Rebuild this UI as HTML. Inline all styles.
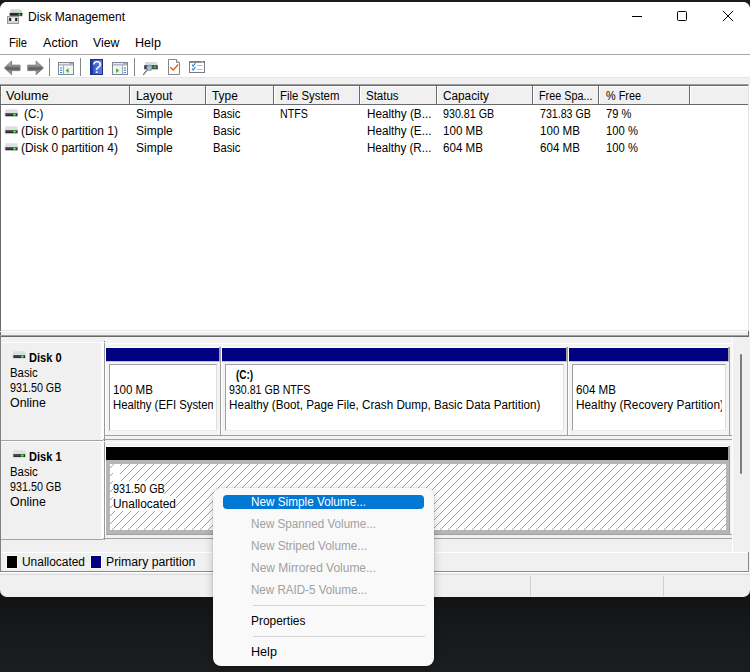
<!DOCTYPE html><html><head><meta charset="utf-8"><title>Disk Management</title><style>

html,body{margin:0;padding:0}
body{width:750px;height:672px;overflow:hidden;background:linear-gradient(#1a1b1d 0,#1a1b1d 590px,#121314 598px,#17181a 625px,#1c1d1f 672px);position:relative;font-family:"Liberation Sans", sans-serif;font-size:12px;color:#000}
div,span,svg{position:absolute;box-sizing:border-box}
.t{white-space:nowrap;line-height:14px;height:14px;transform-origin:0 50%;display:block}
.b{font-weight:bold}
.dis{color:#a2a2a2}

</style></head><body>
<div style="left:0px;top:2px;width:750px;height:595px;background:#f0f0f0;border-radius:7px"></div>
<div style="left:0px;top:2px;width:750px;height:75px;background:#fff;border-radius:7px 7px 0 0"></div>
<div style="left:0px;top:54px;width:750px;height:1px;background:#a8a8a8;"></div>
<div style="left:0px;top:77px;width:750px;height:1px;background:#e6e6e6;"></div>
<svg style="left:628px;top:6px" width="112" height="22" viewBox="0 0 112 22">
<path d="M4 10.5h10" stroke="#000" stroke-width="1" fill="none"/>
<rect x="49.5" y="5.5" width="9" height="9" rx="1" fill="none" stroke="#000" stroke-width="1"/>
<path d="M95 5l10 10M105 5l-10 10" stroke="#000" stroke-width="1" fill="none"/>
</svg>
<svg style="left:6px;top:8px" width="18" height="17" viewBox="0 0 18 17">
<defs><linearGradient id="tg" x1="0" y1="0" x2="0" y2="1"><stop offset="0" stop-color="#e2e4e7"/><stop offset="1" stop-color="#c4c7cb"/></linearGradient></defs>
<path d="M5 1h10l1.5 4h-13z" fill="url(#tg)"/>
<rect x="3.6" y="5" width="12.8" height="3" rx=".4" fill="#2b2b2b"/>
<rect x="3.3" y="7.8" width="13.4" height=".8" fill="#cfd2d6"/>
<circle cx="13.4" cy="6.5" r="1" fill="#35e23a"/>
<rect x="1.5" y="8.5" width="11" height="7" fill="#d6d6d6" stroke="#9a9a9a" stroke-width="1"/>
<rect x="3.2" y="10" width="2" height="3" fill="#1c1c1c"/>
<rect x="9.2" y="10" width="2" height="3" fill="#1c1c1c"/>
<rect x="5.6" y="10" width="3.2" height="3" fill="#f4f4f4"/>
</svg>
<svg style="left:3px;top:60px" width="42" height="16" viewBox="0 0 42 16">
<defs><linearGradient id="ag" x1="0" y1="0" x2="0" y2="1"><stop offset="0" stop-color="#c8c8c8"/><stop offset=".3" stop-color="#9a9a9a"/><stop offset=".55" stop-color="#5c5c5c"/><stop offset=".75" stop-color="#8e8e8e"/><stop offset="1" stop-color="#c0c0c0"/></linearGradient></defs>
<path d="M1.4 7.9 L8.6 1.1 V5.2 H17 V10.6 H8.6 V14.7 Z" fill="url(#ag)" stroke="#7c7c7c" stroke-width="1" stroke-linejoin="round"/>
<path d="M40.4 7.9 L33.2 1.1 V5.2 H24.8 V10.6 H33.2 V14.7 Z" fill="url(#ag)" stroke="#7c7c7c" stroke-width="1" stroke-linejoin="round"/>
</svg>
<div style="left:49px;top:58px;width:1px;height:18px;background:#868686;"></div>
<div style="left:80px;top:58px;width:1px;height:18px;background:#868686;"></div>
<div style="left:134px;top:58px;width:1px;height:18px;background:#868686;"></div>
<svg style="left:58px;top:62px" width="16" height="13" viewBox="0 0 16 13"><rect x=".5" y=".5" width="15" height="12" fill="#fff" stroke="#7f8896"/><rect x="1" y="1" width="14" height="1.4" fill="#e4e8ee"/><rect x="11.6" y="1" width="1.2" height="1.2" fill="#7f8896"/><rect x="13.4" y="1" width="1.2" height="1.2" fill="#7f8896"/><rect x="1" y="2.4" width="14" height="1" fill="#8b93a0"/><rect x="5.2" y="3.4" width=".9" height="8.6" fill="#8b93a0"/><rect x="2" y="5.6" width="2.3" height="1" fill="#3c7fd6"/><rect x="2" y="7.8" width="2.3" height="1" fill="#3c7fd6"/><rect x="2" y="10.1" width="2.3" height="1" fill="#3c7fd6"/><rect x="6.1" y="4" width="8.9" height="8" fill="#f4f4f4"/><path d="M7.7 8.6l2.9-2.4v4.8z" fill="#3dab25"/></svg>
<svg style="left:112px;top:62px" width="16" height="13" viewBox="0 0 16 13"><rect x=".5" y=".5" width="15" height="12" fill="#fff" stroke="#7f8896"/><rect x="1" y="1" width="14" height="1.4" fill="#e4e8ee"/><rect x="11.6" y="1" width="1.2" height="1.2" fill="#7f8896"/><rect x="13.4" y="1" width="1.2" height="1.2" fill="#7f8896"/><rect x="1" y="2.4" width="14" height="1" fill="#8b93a0"/><rect x="9.9" y="3.4" width=".9" height="8.6" fill="#8b93a0"/><rect x="11.7" y="5.6" width="2.3" height="1" fill="#3c7fd6"/><rect x="11.7" y="7.8" width="2.3" height="1" fill="#3c7fd6"/><rect x="11.7" y="10.1" width="2.3" height="1" fill="#3c7fd6"/><rect x="1" y="4" width="8.9" height="8" fill="#f4f4f4"/><path d="M7.1 8.6l-2.9-2.4v4.8z" fill="#3dab25"/></svg>
<svg style="left:90px;top:59px" width="13" height="16" viewBox="0 0 13 16">
<defs><linearGradient id="hg" x1="0" y1="0" x2="1" y2="0"><stop offset="0" stop-color="#1b3aa6"/><stop offset=".22" stop-color="#1b3aa6"/><stop offset=".25" stop-color="#3a5bc8"/><stop offset="1" stop-color="#5e82dd"/></linearGradient></defs>
<rect x="0" y="0" width="13" height="16" fill="url(#hg)"/><rect x=".5" y=".5" width="12" height="15" fill="none" stroke="#1a2f8c"/>
<text x="6.9" y="13.5" font-family="Liberation Sans" font-size="16.5" fill="#fff" text-anchor="middle">?</text>
</svg>
<svg style="left:142px;top:61px" width="18" height="15" viewBox="0 0 18 15">
<path d="M3.5 1h11l1.2 3.2h-13.4z" fill="#d9dbde"/>
<rect x="2.2" y="4.2" width="13.6" height="4.2" fill="#3a3a3a"/>
<rect x="2" y="8.2" width="14" height="1" fill="#cfd2d6"/>
<rect x="11.6" y="5.4" width="2.6" height="1.8" fill="#2fe23a"/>
<circle cx="7.4" cy="6.8" r="2.7" fill="#a9cdea" fill-opacity=".9" stroke="#7d8894" stroke-width=".9"/>
<path d="M5.3 8.9L1.6 13.4" stroke="#6f7a86" stroke-width="1.4" stroke-linecap="round"/>
</svg>
<svg style="left:167px;top:58px" width="14" height="18" viewBox="0 0 14 18">
<path d="M1.5 1.5h8l3 3v12h-11z" fill="#fff" stroke="#858585" stroke-width="1"/>
<path d="M9.5 1.5v3h3" fill="#f0f0f0" stroke="#858585" stroke-width="1"/>
<path d="M3.3 9.3l3 2.8 4.8-5.6" fill="none" stroke="#e8561c" stroke-width="1.4"/>
</svg>
<svg style="left:189px;top:61px" width="16" height="12" viewBox="0 0 16 12">
<rect x=".5" y=".5" width="15" height="11" fill="#fff" stroke="#787d85"/>
<rect x="0" y="0" width="16" height="1.8" fill="#787d85"/><rect x="12.6" y=".6" width="1" height="1" fill="#fff"/>
<path d="M3 3.6l1.2 1.4 2.2-2.8" fill="none" stroke="#2f86e0" stroke-width="1.2"/>
<path d="M3 7.6l1.2 1.4 2.2-2.8" fill="none" stroke="#2f86e0" stroke-width="1.2"/>
<rect x="8.4" y="4" width="5" height="1" fill="#b5b5b5"/><rect x="8.4" y="8" width="5" height="1" fill="#b5b5b5"/>
</svg>
<div style="left:0px;top:84px;width:749px;height:1px;background:#a0a0a0;"></div>
<div style="left:0px;top:85px;width:749px;height:1px;background:#696969;"></div>
<div style="left:0px;top:85px;width:1px;height:251px;background:#696969;"></div>
<div style="left:1px;top:86px;width:747px;height:244px;background:#fff;"></div>
<div style="left:748px;top:85px;width:1px;height:246px;background:#e3e3e3;"></div>
<div style="left:749px;top:84px;width:1px;height:248px;background:#fff;"></div>
<div style="left:1px;top:330px;width:748px;height:1px;background:#e3e3e3;"></div>
<div style="left:0px;top:331px;width:750px;height:1px;background:#fff;"></div>
<div style="left:1px;top:86px;width:747px;height:18px;background:#f0f0f0;"></div>
<div style="left:1px;top:86px;width:747px;height:1px;background:#fff;"></div>
<div style="left:1px;top:104px;width:747px;height:1px;background:#696969;"></div>
<div style="left:1px;top:86px;width:1px;height:18px;background:#fff;"></div>
<div style="left:129px;top:86px;width:1px;height:19px;background:#696969;"></div>
<div style="left:130px;top:86px;width:1px;height:18px;background:#fff;"></div>
<div style="left:205px;top:86px;width:1px;height:19px;background:#696969;"></div>
<div style="left:206px;top:86px;width:1px;height:18px;background:#fff;"></div>
<div style="left:273px;top:86px;width:1px;height:19px;background:#696969;"></div>
<div style="left:274px;top:86px;width:1px;height:18px;background:#fff;"></div>
<div style="left:359px;top:86px;width:1px;height:19px;background:#696969;"></div>
<div style="left:360px;top:86px;width:1px;height:18px;background:#fff;"></div>
<div style="left:436px;top:86px;width:1px;height:19px;background:#696969;"></div>
<div style="left:437px;top:86px;width:1px;height:18px;background:#fff;"></div>
<div style="left:532px;top:86px;width:1px;height:19px;background:#696969;"></div>
<div style="left:533px;top:86px;width:1px;height:18px;background:#fff;"></div>
<div style="left:598px;top:86px;width:1px;height:19px;background:#696969;"></div>
<div style="left:599px;top:86px;width:1px;height:18px;background:#fff;"></div>
<div style="left:689px;top:86px;width:1px;height:19px;background:#696969;"></div>
<div style="left:690px;top:86px;width:1px;height:18px;background:#fff;"></div>
<svg style="left:3.5px;top:108.7px" width="14.9" height="8.38125" viewBox="0 0 16 9">
<path d="M1.8 .3h12.4l.4 2.2 .9 .6v5.6h-15v-5.6l.9-.6z" fill="#dcdee2"/>
<rect x="1.5" y="4.6" width="13" height="3.1" fill="#2c2c2c"/>
<rect x="2.2" y="5.8" width="7.5" height=".6" fill="#555"/>
<path d="M10.7 4.5h1.3v1h1.1v1.3h-1.1v1h-1.3v-1h-1.1v-1.3h1.1z" fill="#2fe63a"/>
</svg>
<svg style="left:3.5px;top:125.7px" width="14.9" height="8.38125" viewBox="0 0 16 9">
<path d="M1.8 .3h12.4l.4 2.2 .9 .6v5.6h-15v-5.6l.9-.6z" fill="#dcdee2"/>
<rect x="1.5" y="4.6" width="13" height="3.1" fill="#2c2c2c"/>
<rect x="2.2" y="5.8" width="7.5" height=".6" fill="#555"/>
<path d="M10.7 4.5h1.3v1h1.1v1.3h-1.1v1h-1.3v-1h-1.1v-1.3h1.1z" fill="#2fe63a"/>
</svg>
<svg style="left:3.5px;top:142.7px" width="14.9" height="8.38125" viewBox="0 0 16 9">
<path d="M1.8 .3h12.4l.4 2.2 .9 .6v5.6h-15v-5.6l.9-.6z" fill="#dcdee2"/>
<rect x="1.5" y="4.6" width="13" height="3.1" fill="#2c2c2c"/>
<rect x="2.2" y="5.8" width="7.5" height=".6" fill="#555"/>
<path d="M10.7 4.5h1.3v1h1.1v1.3h-1.1v1h-1.3v-1h-1.1v-1.3h1.1z" fill="#2fe63a"/>
</svg>
<div style="left:0px;top:335px;width:749px;height:1px;background:#a0a0a0;"></div>
<div style="left:0px;top:336px;width:749px;height:1px;background:#696969;"></div>
<div style="left:0px;top:336px;width:1px;height:236px;background:#808080;"></div>
<div style="left:748px;top:331px;width:1px;height:6px;background:#696969;"></div>
<div style="left:105px;top:337px;width:627px;height:202px;background:#f3f3f3;"></div>
<div style="left:732px;top:337px;width:1px;height:215px;background:#fff;"></div>
<div style="left:105px;top:343px;width:627px;height:1px;background:#fff;"></div>
<div style="left:105px;top:442px;width:627px;height:1px;background:#fff;"></div>
<div style="left:1px;top:342px;width:103px;height:1px;background:#fff;"></div>
<div style="left:101px;top:343px;width:3px;height:97px;background:#fcfcfc;"></div>
<div style="left:1px;top:440px;width:102px;height:1px;background:#a4a4a4;"></div>
<div style="left:104px;top:343px;width:1px;height:98px;background:#9a9a9a;"></div>
<div style="left:104px;top:341px;width:1px;height:1px;background:#777;"></div>
<div style="left:105px;top:435px;width:627px;height:1px;background:#a0a0a0;"></div>
<div style="left:103px;top:439px;width:629px;height:1px;background:#a0a0a0;"></div>
<svg style="left:11.75px;top:350.7px" width="14.5" height="8.15625" viewBox="0 0 16 9">
<path d="M1.8 .3h12.4l.4 2.2 .9 .6v5.6h-15v-5.6l.9-.6z" fill="#dcdee2"/>
<rect x="1.5" y="4.6" width="13" height="3.1" fill="#2c2c2c"/>
<rect x="2.2" y="5.8" width="7.5" height=".6" fill="#555"/>
<path d="M10.7 4.5h1.3v1h1.1v1.3h-1.1v1h-1.3v-1h-1.1v-1.3h1.1z" fill="#2fe63a"/>
</svg>
<div style="left:1px;top:441px;width:103px;height:1px;background:#fff;"></div>
<div style="left:101px;top:442px;width:3px;height:97px;background:#fcfcfc;"></div>
<div style="left:1px;top:539px;width:102px;height:1px;background:#a4a4a4;"></div>
<div style="left:104px;top:442px;width:1px;height:98px;background:#9a9a9a;"></div>
<div style="left:104px;top:440px;width:1px;height:1px;background:#777;"></div>
<div style="left:105px;top:534px;width:627px;height:1px;background:#a0a0a0;"></div>
<div style="left:103px;top:538px;width:629px;height:1px;background:#a0a0a0;"></div>
<svg style="left:11.75px;top:449.7px" width="14.5" height="8.15625" viewBox="0 0 16 9">
<path d="M1.8 .3h12.4l.4 2.2 .9 .6v5.6h-15v-5.6l.9-.6z" fill="#dcdee2"/>
<rect x="1.5" y="4.6" width="13" height="3.1" fill="#2c2c2c"/>
<rect x="2.2" y="5.8" width="7.5" height=".6" fill="#555"/>
<path d="M10.7 4.5h1.3v1h1.1v1.3h-1.1v1h-1.3v-1h-1.1v-1.3h1.1z" fill="#2fe63a"/>
</svg>
<div style="left:740px;top:354px;width:2px;height:120px;background:#7e7e7e;border-radius:1px"></div>
<div style="left:105px;top:347px;width:1px;height:88px;background:#fff;"></div>
<div style="left:106px;top:347px;width:113px;height:1px;background:#fff;"></div>
<div style="left:106px;top:348px;width:113px;height:13px;background:#000080;"></div>
<div style="left:106px;top:361px;width:114px;height:1px;background:#c6c3bb;"></div>
<div style="left:106px;top:362px;width:114px;height:73px;background:#f4f4f4;"></div>
<div style="left:219px;top:347px;width:2px;height:14px;background:#a4a4a0;"></div>
<div style="left:220px;top:347px;width:1px;height:88px;background:#a0a0a0;"></div>
<div style="left:109px;top:364px;width:108px;height:67px;background:#fff;border:1px solid #a0a0a0;border-right-color:#dedede;border-bottom-color:#ececec"></div>
<div style="left:221px;top:347px;width:1px;height:88px;background:#fff;"></div>
<div style="left:222px;top:347px;width:344px;height:1px;background:#fff;"></div>
<div style="left:222px;top:348px;width:344px;height:13px;background:#000080;"></div>
<div style="left:222px;top:361px;width:345px;height:1px;background:#c6c3bb;"></div>
<div style="left:222px;top:362px;width:345px;height:73px;background:#f4f4f4;"></div>
<div style="left:566px;top:347px;width:2px;height:14px;background:#a4a4a0;"></div>
<div style="left:567px;top:347px;width:1px;height:88px;background:#a0a0a0;"></div>
<div style="left:225px;top:364px;width:339px;height:67px;background:#fff;border:1px solid #a0a0a0;border-right-color:#dedede;border-bottom-color:#ececec"></div>
<div style="left:568px;top:347px;width:1px;height:88px;background:#fff;"></div>
<div style="left:569px;top:347px;width:159px;height:1px;background:#fff;"></div>
<div style="left:569px;top:348px;width:159px;height:13px;background:#000080;"></div>
<div style="left:569px;top:361px;width:160px;height:1px;background:#c6c3bb;"></div>
<div style="left:569px;top:362px;width:160px;height:73px;background:#f4f4f4;"></div>
<div style="left:728px;top:347px;width:2px;height:14px;background:#a4a4a0;"></div>
<div style="left:729px;top:347px;width:1px;height:88px;background:#a0a0a0;"></div>
<div style="left:572px;top:364px;width:154px;height:67px;background:#fff;border:1px solid #a0a0a0;border-right-color:#dedede;border-bottom-color:#ececec"></div>
<div style="left:105px;top:446px;width:1px;height:89px;background:#fff;"></div>
<div style="left:106px;top:446px;width:622px;height:1px;background:#fff;"></div>
<div style="left:106px;top:447px;width:622px;height:13px;background:#000;"></div>
<svg style="left:108px;top:462px" width="619" height="70" viewBox="108 462 619 70" shape-rendering="crispEdges">
<defs><pattern id="hp" x="0" y="0" width="8" height="8" patternUnits="userSpaceOnUse"><rect width="8" height="8" fill="#fff"/>
<rect x="0" y="1" width="1" height="1" fill="#a2a2a2"/><rect x="1" y="0" width="1" height="1" fill="#a2a2a2"/><rect x="2" y="7" width="1" height="1" fill="#a2a2a2"/><rect x="3" y="6" width="1" height="1" fill="#a2a2a2"/><rect x="4" y="5" width="1" height="1" fill="#a2a2a2"/><rect x="5" y="4" width="1" height="1" fill="#a2a2a2"/><rect x="6" y="3" width="1" height="1" fill="#a2a2a2"/><rect x="7" y="2" width="1" height="1" fill="#a2a2a2"/></pattern></defs><rect x="100" y="456" width="640" height="88" fill="url(#hp)"/></svg>
<div style="left:106px;top:460px;width:623px;height:3.5px;background:#b6b6b6;"></div>
<div style="left:106px;top:530px;width:623px;height:3.6px;background:#b6b6b6;"></div>
<div style="left:106px;top:460px;width:3.5px;height:73.6px;background:#b6b6b6;"></div>
<div style="left:725.5px;top:460px;width:3.5px;height:73.6px;background:#b6b6b6;"></div>
<div style="left:728px;top:446px;width:2px;height:14px;background:#a4a4a0;"></div>
<div style="left:729px;top:446px;width:1px;height:89px;background:#a0a0a0;"></div>
<div style="left:113px;top:466px;width:7px;height:15px;background:#fff;"></div>
<div style="left:113px;top:481px;width:51px;height:15px;background:#fff;"></div>
<div style="left:113px;top:496px;width:63px;height:15px;background:#fff;"></div>
<div style="left:1px;top:552px;width:747px;height:1px;background:#fff;"></div>
<div style="left:748px;top:552px;width:1px;height:20px;background:#8c8c8c;"></div>
<div style="left:1px;top:571px;width:748px;height:1px;background:#8c8c8c;"></div>
<div style="left:0px;top:572px;width:750px;height:1px;background:#fff;"></div>
<div style="left:7px;top:556px;width:10px;height:12px;background:#000;box-shadow:0 0 0 1px #fafafa"></div>
<div style="left:91px;top:556px;width:10px;height:12px;background:#000080;box-shadow:0 0 0 1px #fafafa"></div>
<div style="left:0px;top:574px;width:750px;height:1px;background:#dcdcdc;"></div>
<div style="left:663px;top:576px;width:1px;height:20px;background:#d0d0d0;"></div>
<div style="left:530px;top:576px;width:1px;height:20px;background:#d0d0d0;"></div>
<div style="left:213px;top:488px;width:221px;height:178px;background:#f9f9f9;border-radius:8px;box-shadow:0 0 0 1px rgba(0,0,0,.05),0 3px 10px rgba(0,0,0,.22)"></div>
<div style="left:223px;top:495px;width:201px;height:14px;background:#0078d4;border-radius:4px"></div>
<div style="left:253px;top:605px;width:172px;height:1px;background:#d4d4d4;"></div>
<div style="left:253px;top:636px;width:172px;height:1px;background:#d4d4d4;"></div>
<span class="t" style="left:27.5px;top:10px;transform:scaleX(1.0039);">Disk Management</span>
<span class="t" style="left:8.7px;top:36px;transform:scaleX(0.9305);">File</span>
<span class="t" style="left:43.0px;top:36px;transform:scaleX(1.0492);">Action</span>
<span class="t" style="left:93.2px;top:36px;transform:scaleX(1.0234);">View</span>
<span class="t" style="left:134.5px;top:36px;transform:scaleX(1.0491);">Help</span>
<span class="t" style="left:6.2px;top:89px;transform:scaleX(1.0642);">Volume</span>
<span class="t" style="left:136.2px;top:89px;transform:scaleX(1.0102);">Layout</span>
<span class="t" style="left:212.2px;top:89px;transform:scaleX(0.9917);">Type</span>
<span class="t" style="left:280.2px;top:89px;transform:scaleX(0.9476);">File System</span>
<span class="t" style="left:366.2px;top:89px;transform:scaleX(0.9579);">Status</span>
<span class="t" style="left:443.2px;top:89px;transform:scaleX(0.9810);">Capacity</span>
<span class="t" style="left:539.2px;top:89px;transform:scaleX(0.8994);">Free Spa...</span>
<span class="t" style="left:605.6px;top:89px;transform:scaleX(0.9047);">% Free</span>
<span class="t" style="left:23.7px;top:107px;transform:scaleX(0.9700);">(C:)</span>
<span class="t" style="left:136.2px;top:107px;transform:scaleX(1.0031);">Simple</span>
<span class="t" style="left:212.6px;top:107px;transform:scaleX(0.9338);">Basic</span>
<span class="t" style="left:280.2px;top:107px;transform:scaleX(0.8901);">NTFS</span>
<span class="t" style="left:366.6px;top:107px;transform:scaleX(0.9753);">Healthy (B...</span>
<span class="t" style="left:443.2px;top:107px;transform:scaleX(0.8924);">930.81 GB</span>
<span class="t" style="left:539.6px;top:107px;transform:scaleX(0.8854);">731.83 GB</span>
<span class="t" style="left:605.6px;top:107px;transform:scaleX(0.9284);">79 %</span>
<span class="t" style="left:20.7px;top:124px;transform:scaleX(0.9951);">(Disk 0 partition 1)</span>
<span class="t" style="left:136.2px;top:124px;transform:scaleX(1.0031);">Simple</span>
<span class="t" style="left:212.6px;top:124px;transform:scaleX(0.9338);">Basic</span>
<span class="t" style="left:366.6px;top:124px;transform:scaleX(0.9753);">Healthy (E...</span>
<span class="t" style="left:443.2px;top:124px;transform:scaleX(0.9647);">100 MB</span>
<span class="t" style="left:539.6px;top:124px;transform:scaleX(0.9647);">100 MB</span>
<span class="t" style="left:605.6px;top:124px;transform:scaleX(0.9374);">100 %</span>
<span class="t" style="left:20.7px;top:141px;transform:scaleX(0.9951);">(Disk 0 partition 4)</span>
<span class="t" style="left:136.2px;top:141px;transform:scaleX(1.0031);">Simple</span>
<span class="t" style="left:212.6px;top:141px;transform:scaleX(0.9338);">Basic</span>
<span class="t" style="left:366.6px;top:141px;transform:scaleX(0.9657);">Healthy (R...</span>
<span class="t" style="left:443.2px;top:141px;transform:scaleX(0.9647);">604 MB</span>
<span class="t" style="left:539.6px;top:141px;transform:scaleX(0.9647);">604 MB</span>
<span class="t" style="left:605.6px;top:141px;transform:scaleX(0.9374);">100 %</span>
<span class="t" style="left:29.1px;top:351px;transform:scaleX(0.9220);font-weight:bold">Disk 0</span>
<span class="t" style="left:9.5px;top:366px;transform:scaleX(0.9474);">Basic</span>
<span class="t" style="left:9.8px;top:381px;transform:scaleX(0.8959);">931.50 GB</span>
<span class="t" style="left:9.5px;top:396px;transform:scaleX(1.0321);">Online</span>
<span class="t" style="left:29.1px;top:450px;transform:scaleX(0.9220);font-weight:bold">Disk 1</span>
<span class="t" style="left:9.5px;top:465px;transform:scaleX(0.9474);">Basic</span>
<span class="t" style="left:9.8px;top:480px;transform:scaleX(0.8959);">931.50 GB</span>
<span class="t" style="left:9.5px;top:495px;transform:scaleX(1.0321);">Online</span>
<span class="t" style="left:112.7px;top:383px;transform:scaleX(0.9647);">100 MB</span>
<div style="left:112.7px;top:398px;width:100.7px;height:15px;overflow:hidden"><span class="t" style="left:0;top:0;transform:scaleX(0.9452);">Healthy (EFI System</span></div>
<span class="t" style="left:235.5px;top:368px;transform:scaleX(0.8327);font-weight:bold">(C:)</span>
<span class="t" style="left:229.0px;top:383px;transform:scaleX(0.8843);">930.81 GB NTFS</span>
<span class="t" style="left:228.7px;top:398px;transform:scaleX(0.9727);">Healthy (Boot, Page File, Crash Dump, Basic Data Partition)</span>
<span class="t" style="left:575.5px;top:383px;transform:scaleX(0.9647);">604 MB</span>
<div style="left:575.5px;top:398px;width:146.1px;height:15px;overflow:hidden"><span class="t" style="left:0;top:0;transform:scaleX(0.9856);">Healthy (Recovery Partition)</span></div>
<span class="t" style="left:112.7px;top:482px;transform:scaleX(0.9028);">931.50 GB</span>
<span class="t" style="left:112.7px;top:497px;transform:scaleX(0.9941);">Unallocated</span>
<span class="t" style="left:250.6px;top:495px;transform:scaleX(0.9796);color:#fff">New Simple Volume...</span>
<span class="t" style="left:250.6px;top:517px;transform:scaleX(0.9709);color:#a0a0a0">New Spanned Volume...</span>
<span class="t" style="left:250.6px;top:539px;transform:scaleX(0.9770);color:#a0a0a0">New Striped Volume...</span>
<span class="t" style="left:250.6px;top:561px;transform:scaleX(0.9970);color:#a0a0a0">New Mirrored Volume...</span>
<span class="t" style="left:250.6px;top:583px;transform:scaleX(0.9663);color:#a0a0a0">New RAID-5 Volume...</span>
<span class="t" style="left:250.6px;top:614px;transform:scaleX(0.9945);">Properties</span>
<span class="t" style="left:250.6px;top:645px;transform:scaleX(1.0491);">Help</span>
<span class="t" style="left:21.7px;top:555px;transform:scaleX(0.9941);">Unallocated</span>
<span class="t" style="left:106.2px;top:555px;transform:scaleX(1.0234);">Primary partition</span>

</body></html>
